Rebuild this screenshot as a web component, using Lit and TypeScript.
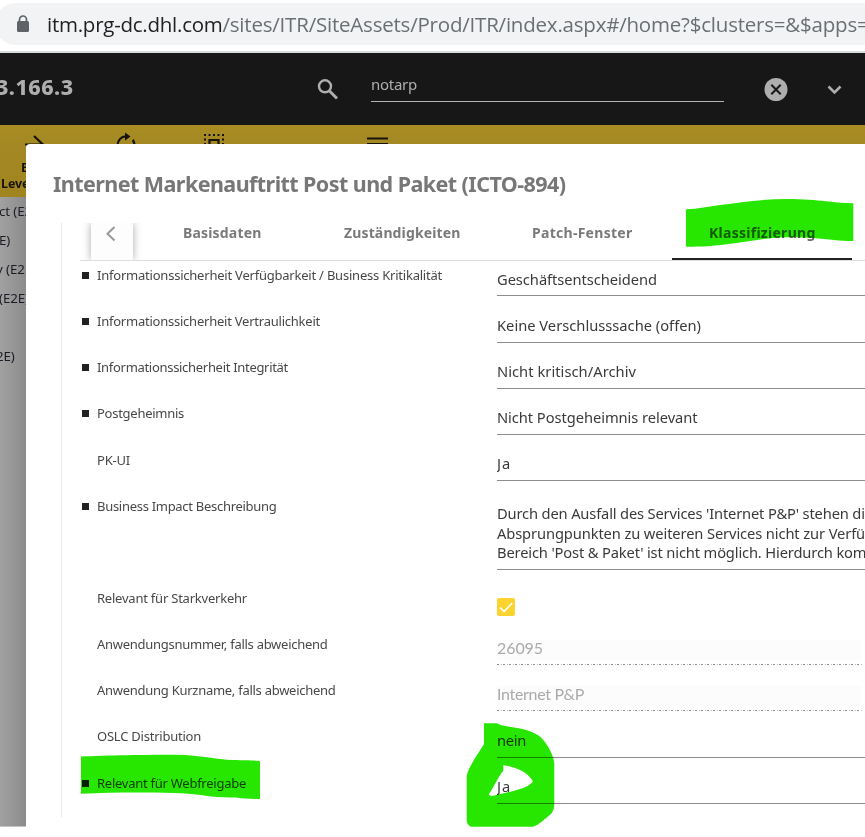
import { LitElement, html, svg, css, nothing } from "lit";
import { customElement, property } from "lit/decorators.js";

/** One line of text, tracked so that it fills the given measure. */
@customElement("text-run")
class TextRun extends LitElement {
  @property({ type: Number }) width = 0;
  @property() text = "";
  static styles = css`
    :host { display: inline-block; white-space: pre; }
  `;
  render() {
    return html`<span>${this.text}</span>`;
  }
  async updated() {
    await document.fonts.ready;
    const span = this.renderRoot.querySelector("span") as HTMLElement;
    span.style.letterSpacing = "0";
    const natural = span.getBoundingClientRect().width;
    if (this.width && this.text.length) {
      span.style.letterSpacing = `${(this.width - natural) / this.text.length}px`;
    }
  }
}

interface Row {
  label: string;
  lw: number;
  marked?: boolean;
  lines?: [string, number][];
  kind?: "check" | "disabled" | "tall";
}

const ROWS: Row[] = [
  { label: "Informationssicherheit Verfügbarkeit / Business Kritikalität", lw: 345, marked: true, lines: [["Geschäftsentscheidend", 160]] },
  { label: "Informationssicherheit Vertraulichkeit", lw: 223, marked: true, lines: [["Keine Verschlusssache (offen)", 204]] },
  { label: "Informationssicherheit Integrität", lw: 191, marked: true, lines: [["Nicht kritisch/Archiv", 139]] },
  { label: "Postgeheimnis", lw: 87, marked: true, lines: [["Nicht Postgeheimnis relevant", 200.5]] },
  { label: "PK-UI", lw: 33, lines: [["Ja", 14]] },
  {
    label: "Business Impact Beschreibung", lw: 179.5, marked: true, kind: "tall",
    lines: [
      ["Durch den Ausfall des Services 'Internet P&P' stehen die", 376],
      ["Absprungpunkten zu weiteren Services nicht zur Verfüg", 377],
      ["Bereich 'Post & Paket' ist nicht möglich. Hierdurch komm", 383],
    ],
  },
  { label: "Relevant für Starkverkehr", lw: 150, kind: "check" },
  { label: "Anwendungsnummer, falls abweichend", lw: 230.5, kind: "disabled", lines: [["26095", 46]] },
  { label: "Anwendung Kurzname, falls abweichend", lw: 238.5, kind: "disabled", lines: [["Internet P&P", 87]] },
  { label: "OSLC Distribution", lw: 104, lines: [["nein", 29]] },
  { label: "Relevant für Webfreigabe", lw: 149, marked: true, lines: [["Ja", 14]] },
];

@customElement("app-root")
class AppRoot extends LitElement {
  static styles = css`
    :host {
      display: flex; flex-direction: column; position: relative;
      width: 865px; height: 837px; overflow: hidden; background: #fff;
      font-family: "Noto Sans", "Open Sans", sans-serif; color: #333;
    }
    * { box-sizing: border-box; }
    svg { display: block; flex: none; }
    .browser { flex: none; height: 53px; padding-top: 3px; border-bottom: 2px solid #d9dddd; }
    .pill {
      height: 42px; margin-left: -5px; padding-left: 21px; background: #f1f3f4;
      border-radius: 21px 0 0 21px; display: flex; align-items: center;
      font: 20.5px/42px "Open Sans", sans-serif; color: #6b6f74; white-space: nowrap;
    }
    .pill svg { margin-right: 17px; }
    .pill text-run { padding-bottom: 1px; }
    .host { color: #202124; }
    .top { flex: none; height: 72px; background: #171717; display: flex; color: #aeaeae; }
    .version { width: 317px; font-weight: 800; font-size: 21.5px; line-height: 67px; }
    .version text-run { margin-left: -4px; }
    .glass { margin-top: 25px; }
    .search { width: 353px; height: 49px; margin-left: 32px; padding-top: 19px; border-bottom: 1px solid #b3b3b3; font-size: 15px; line-height: 24px; }
    .clear { margin: 24px 0 0 40px; }
    .chev { margin: 32px 0 0 39px; }
    .tools { flex: none; height: 72px; background: linear-gradient(#a98d22, #a38824 20px, #a0851f); position: relative; display: flex; color: #17150a; }
    .tools svg { margin-top: 6px; }
    .t1 { margin-left: 22px; } .t2 { margin-left: 67px; }
    .t3 { margin-left: 64px; } .t4 { margin-left: 141px; }
    .caption { position: absolute; left: 0; top: 35px; width: 40px; font-weight: 700; font-size: 12.5px; line-height: 16px; }
    .caption div:first-child { padding-left: 21px; }
    .caption text-run { margin-left: 1px; }
    .side { flex: none; width: 26px; height: 630px; background: linear-gradient(90deg, #a1a1a1, #8c8c8c); border-bottom: 1px solid #c4c4c4; font-size: 13.3px; letter-spacing: -0.1px; line-height: 29px; white-space: nowrap; overflow: hidden; color: #1c1c26; display: flex; flex-direction: column; }
    .side div { height: 29.1px; flex: none; }
    .side .n1 { margin-left: -1px; }
    .side .n4 { margin-left: -4px; }
    .dialog { position: absolute; left: 26px; top: 144px; right: 0; bottom: 0; background: #fff; border-radius: 4px 0 0 0; overflow: hidden; }
    .title { height: 79px; padding: 24px 0 0 27px; font-weight: 700; font-size: 21.5px; line-height: 31px; color: #777; }
    .body { height: 594px; margin-left: 35px; border-left: 1px solid #e9e9e9; padding-left: 18px; }
    .tabs { height: 38px; border-bottom: 1px solid #dedede; display: flex; font-weight: 700; font-size: 14px; line-height: 19.5px; color: #7a7a7a; }
    .back { flex: none; width: 42px; height: 37px; margin-left: 11px; padding: 3px 0 0 13px; background: #fdfdfd; box-shadow: 0 0 8px #aaa; clip-path: inset(0 -12px 0 -12px); }
    .tab text-run { display: block; }
    .b1 { margin-left: 50px; width: 161px; } .b2 { width: 188px; } .b3 { width: 140px; }
    .active { width: 180px; height: 37px; padding-left: 37px; border-bottom: 2px solid #222; color: #666; }
    .row { display: grid; grid-template-columns: 17px 400px 1fr; height: 46.15px; }
    .row.tall { height: 92.3px; }
    .bullet { width: 7px; height: 7px; margin: 11px 0 0 2px; background: #212121; }
    .label { font-size: 13px; line-height: 28px; color: #484848; }
    .value { height: 35.4px; padding-top: 8.6px; border-bottom: 1px solid #8d8d8d; font-size: 14.7px; line-height: 19.5px; color: #3a3a3a; overflow: hidden; }
    .value div { height: 19.5px; }
    .tall .value { height: 78px; padding-top: 12.5px; }
    .value.disabled { height: 34.800px; padding-top: 7.6px; border-bottom: 0; color: #aaa; font-family: Lato, "Noto Sans", sans-serif; font-size: 16px; margin-right: 3px; background: repeating-linear-gradient(90deg, #8f8f8f 0 2px, #fff 2px 4px, #bbb 4px 5px, #fff 5px 6px) bottom / 100% 1px no-repeat, linear-gradient(#fcfcfc, #fcfcfc) 0 10px / 100% 20px no-repeat; }
    .check { width: 18px; height: 18px; margin-top: 13.6px; border-radius: 2px; background: #fdd32f; }
    .ink { position: absolute; inset: 0; mix-blend-mode: multiply; pointer-events: none; }
  `;

  private row(r: Row) {
    return html`<div class="row ${r.kind === "tall" ? "tall" : ""}">
      <div>${r.marked ? html`<div class="bullet"></div>` : nothing}</div>
      <div class="label"><text-run .text=${r.label} .width=${r.lw}></text-run></div>
      ${r.kind === "check"
        ? html`<div class="check"><svg width="18" height="18" viewBox="0 0 18 18"><path d="M3 9.500 7 13.500 15.300 5" fill="none" stroke="#fff" stroke-width="1.600"/></svg></div>`
        : html`<div class="value ${r.kind === "disabled" ? "disabled" : ""}">${r.lines?.map(([t, w]) => html`<div><text-run .text=${t} .width=${w}></text-run></div>`)}</div>`}
    </div>`;
  }

  private ink() {
    const shapes = [
      "M686 209.3C698 209 709 206.500 720 205C742 202 763 199 787 199C804 199 815 200 826 201.300C836 202.500 844 203.300 853.300 203.300V241C846 241 840 240.700 834 240C821 238.500 803 237 783 237.300C758 238.500 733 244.500 710 246C702 246.700 694 246.700 686 246.700Z",
      "M81 756.500C105 755.300 148 754.700 177 754.700C200 755 216 759.500 233 760C245 760.300 252 760 260 761.300V799C251 799 244 798.700 236 797.500C228 797.300 219 797.500 211 796.500C197 794.500 184 793 173 793C145 792 110 792.300 81 793.700Z",
      "M484 723.300H497L500 724.700C511 728 525 727.500 537 734.500C545 739 554.300 755 554.300 764V805C554.300 808 553 811.500 551 814C545 818.500 539 825 533 826.700H471C468 825.500 466.700 823 466.700 820V777C466.700 769 480 751 484 744ZM503.300 765.300C516 767 528 772 533 781.700C524 791 506 791.500 493.500 795.800C491 796 489 795.500 488.700 794.300C494 787 498 777 503.300 770.700Z",
    ];
    return html`<svg class="ink" width="865" height="837">${shapes.map((d) => svg`<path d=${d} fill="#27e600" fill-rule="evenodd"/>`)}</svg>`;
  }

  render() {
    return html`
      <div class="browser"><div class="pill">
        <svg width="14" height="18" viewBox="0 0 14 18"><rect x="1" y="6" width="12" height="11" rx="1.500" fill="#5f6368"/><path d="M3.500 7V4.500a3.500 3.500 0 0 1 7 0V7" fill="none" stroke="#5f6368" stroke-width="1.700"/></svg>
        <text-run class="host" .text=${"itm.prg-dc.dhl.com"} .width=${175.5}></text-run><text-run .text=${"/sites/ITR/SiteAssets/Prod/ITR/index.aspx#/home?$clusters=&$apps="} .width=${646}></text-run>
      </div></div>
      <div class="top">
        <div class="version"><text-run .text=${"3.166.3"} .width=${77.5}></text-run></div>
        <svg class="glass" width="22" height="23" viewBox="0 0 22 23"><circle cx="8" cy="8.300" r="6" fill="none" stroke="#aeaeae" stroke-width="2.400"/><path d="m12 12.500 8 8" stroke="#aeaeae" stroke-width="3"/></svg>
        <div class="search"><text-run .text=${"notarp"} .width=${46}></text-run></div>
        <svg class="clear" width="24" height="24" viewBox="0 0 24 24"><circle cx="12" cy="12.500" r="11.500" fill="#aeaeae"/><path d="m7.300 7.800 9.400 9.400m0-9.400-9.400 9.400" stroke="#171717" stroke-width="2"/></svg>
        <svg class="chev" width="16" height="10" viewBox="0 0 16 10"><path d="m1.500 1.500 6 6 6-6" fill="none" stroke="#aeaeae" stroke-width="2.600"/></svg>
      </div>
      <div class="tools">
        <svg class="t1" width="25" height="24" viewBox="0 0 25 24"><path d="M3 13.500h18M12 5l9 8.500-9 8.500" fill="none" stroke="currentColor" stroke-width="2.200"/></svg>
        <svg class="t2" width="24" height="24" viewBox="0 0 24 24"><path d="M4 15A8 8 0 0 1 12.500 5.500" fill="none" stroke="currentColor" stroke-width="2.200"/><path d="M11 1.500 16.500 5.500 11 9.500zM18 9.500l1.700-1.500q1.500 2.500 1.700 5h-2.200z" fill="currentColor"/></svg>
        <svg class="t3" width="24" height="24" viewBox="0 0 24 24"><path d="M2 4h20" stroke="currentColor" stroke-width="2" stroke-dasharray="2 2.500"/><path d="M2 7.500h2v2H2zM20 7.500h2v2h-2zM2 12h2v2H2zM20 12h2v2h-2z" fill="currentColor"/><path d="M7.500 18V9h9v9" fill="none" stroke="currentColor" stroke-width="2.200"/></svg>
        <svg class="t4" width="21" height="24" viewBox="0 0 21 24"><path d="M0 7.500h21M0 13.200h21" stroke="currentColor" stroke-width="2.200"/></svg>
        <div class="caption"><div>E2E</div><text-run .text=${"Level"} .width=${32}></text-run></div>
      </div>
      <div class="side">
        <div class="n1">ct (E2E)</div><div class="n1">E)</div><div class="n4">y (E2E)</div><div class="n1">(E2E)</div><div></div><div class="n4">2E)</div>
      </div>
      <div class="dialog">
        <div class="title"><text-run .text=${"Internet Markenauftritt Post und Paket (ICTO-894)"} .width=${512.5}></text-run></div>
        <div class="body">
          <div class="tabs">
            <div class="back"><svg width="14" height="16" viewBox="0 0 14 16"><path d="M10.500 1 3.500 7.700 10.500 14.500" fill="none" stroke="#999" stroke-width="2"/></svg></div>
            <div class="tab b1"><text-run .text=${"Basisdaten"} .width=${78.5}></text-run></div>
            <div class="tab b2"><text-run .text=${"Zuständigkeiten"} .width=${116.5}></text-run></div>
            <div class="tab b3"><text-run .text=${"Patch-Fenster"} .width=${100.5}></text-run></div>
            <div class="tab active"><text-run .text=${"Klassifizierung"} .width=${106.5}></text-run></div>
          </div>
          ${ROWS.map((r) => this.row(r))}
        </div>
      </div>
      ${this.ink()}
    `;
  }
}
